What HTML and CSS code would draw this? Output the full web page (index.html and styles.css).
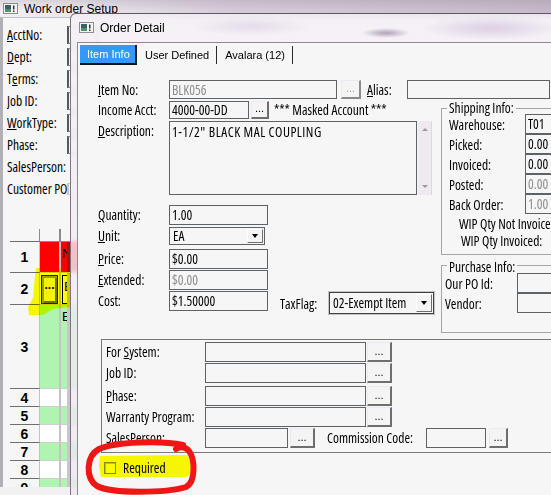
FILE: index.html
```html
<!DOCTYPE html>
<html lang="en">
<head>
    <meta charset="UTF-8">
    <meta name="viewport" content="width=device-width, initial-scale=1.0">
    <title>Order Detail</title>
    <link rel="stylesheet" href="styles.css">
</head>
<body>
<div class="desk">

    <!-- window behind: Work order Setup -->
    <div class="bgwin">
        <div class="win-title bg-title">
            <svg class="appicon" width="15" height="11" viewBox="0 0 15 11"><rect x="0.5" y="0.5" width="14" height="10" fill="#f4f4f4" stroke="#8c8c8c"/><rect x="2" y="2" width="6" height="7" fill="#3d5f66"/><rect x="2" y="6" width="6" height="3" fill="#4e9466"/><rect x="10" y="2.5" width="1.5" height="4" fill="#333"/><rect x="10" y="7.5" width="1.5" height="1.5" fill="#333"/></svg>
            <span>Work order Setup</span>
        </div>
        <div class="bg-body">
            <div class="bg-row"><span class="bg-lbl"><u>A</u>cctNo:</span><span class="bg-input"></span></div>
            <div class="bg-row"><span class="bg-lbl"><u>D</u>ept:</span><span class="bg-input"></span></div>
            <div class="bg-row"><span class="bg-lbl">T<u>e</u>rms:</span><span class="bg-input"></span></div>
            <div class="bg-row"><span class="bg-lbl"><u>J</u>ob ID:</span><span class="bg-input"></span></div>
            <div class="bg-row"><span class="bg-lbl"><u>W</u>orkType:</span><span class="bg-input"></span></div>
            <div class="bg-row"><span class="bg-lbl">Phase:</span><span class="bg-input"></span></div>
            <div class="bg-row"><span class="bg-lbl">SalesPerson:</span></div>
            <div class="bg-row"><span class="bg-lbl">Customer PO</span><span class="bg-input short"></span></div>

            <div class="grid">
                <div class="rh hd"></div><div class="gc c1 hd"></div><div class="gc c2 hd"></div><div class="gc split hd"></div><div class="gc c3 hd"></div>

                <div class="rh">1</div><div class="gc c1 red"></div><div class="gc c2 red">N</div><div class="gc split dark-red"></div><div class="gc c3 red"></div>

                <div class="rh">2</div>
                <div class="gc c1 cur"><span class="cell-btn">...</span></div>
                <div class="gc c2 cur"><span class="cell-edit">E</span></div>
                <div class="gc split"></div><div class="gc c3"></div>

                <div class="rh">3</div><div class="gc c1 grn"></div><div class="gc c2 grn">E</div><div class="gc split"></div><div class="gc c3 grn"></div>
                <div class="rh">4</div><div class="gc c1"></div><div class="gc c2"></div><div class="gc split"></div><div class="gc c3"></div>
                <div class="rh">5</div><div class="gc c1 grn"></div><div class="gc c2 grn"></div><div class="gc split"></div><div class="gc c3 grn"></div>
                <div class="rh">6</div><div class="gc c1"></div><div class="gc c2"></div><div class="gc split"></div><div class="gc c3"></div>
                <div class="rh">7</div><div class="gc c1 grn"></div><div class="gc c2 grn"></div><div class="gc split"></div><div class="gc c3 grn"></div>
                <div class="rh">8</div><div class="gc c1"></div><div class="gc c2"></div><div class="gc split"></div><div class="gc c3"></div>
                <div class="rh">9</div><div class="gc c1 grn"></div><div class="gc c2 grn"></div><div class="gc split"></div><div class="gc c3 grn"></div>
            </div>
        </div>
    </div>

    <!-- Order Detail dialog -->
    <div class="dialog">
        <div class="win-title dlg-title">
            <svg class="appicon" width="15" height="11" viewBox="0 0 15 11"><rect x="0.5" y="0.5" width="14" height="10" fill="#f4f4f4" stroke="#8c8c8c"/><rect x="2" y="2" width="6" height="7" fill="#3d5f66"/><rect x="2" y="6" width="6" height="3" fill="#4e9466"/><rect x="10" y="2.5" width="1.5" height="4" fill="#333"/><rect x="10" y="7.5" width="1.5" height="1.5" fill="#333"/></svg>
            <span>Order Detail</span>
        </div>

        <div class="client">
            <div class="tabs">
                <span class="tab active">Item Info</span>
                <span class="tab">User Defined</span>
                <span class="tab">Avalara (12)</span>
            </div>

            <div class="row top-row">
                <span class="lbl"><u>I</u>tem No:</span>
                <span class="fld dim w-item">BLK056</span>
                <span class="btn off w-sbtn">...</span>
                <span class="lbl alias"><u>A</u>lias:</span>
                <span class="fld w-alias"></span>
            </div>

            <div class="mid">
                <div class="left-col">
                    <div class="row acct-row">
                        <span class="lbl">Income Acct:</span>
                        <span class="fld w-acct">4000-00-DD</span>
                        <span class="btn w-abtn">...</span>
                        <span class="note">*** Masked Account ***</span>
                    </div>
                    <div class="row desc-row">
                        <span class="lbl top"><u>D</u>escription:</span>
                        <div class="memo">1-1/2" BLACK MAL COUPLING</div>
                        <div class="vscroll"><i class="arr up"></i><i class="arr down"></i></div>
                    </div>
                    <div class="row qty-row">
                        <span class="lbl"><u>Q</u>uantity:</span>
                        <span class="fld w-num">1.00</span>
                    </div>
                    <div class="row unit-row">
                        <span class="lbl"><u>U</u>nit:</span>
                        <span class="sel w-unit"><span class="val">EA</span><span class="ddbtn"></span></span>
                    </div>
                    <div class="row price-row">
                        <span class="lbl"><u>P</u>rice:</span>
                        <span class="fld w-num">$0.00</span>
                    </div>
                    <div class="row ext-row">
                        <span class="lbl"><u>E</u>xtended:</span>
                        <span class="fld dim w-num">$0.00</span>
                    </div>
                    <div class="row cost-row">
                        <span class="lbl">Cost:</span>
                        <span class="fld w-num">$1.50000</span>
                        <div class="taxflag">
                            <span class="tax-lbl">TaxFlag:</span>
                            <span class="sel tax-sel"><span class="val">02-Exempt Item</span><span class="ddbtn"></span></span>
                        </div>
                    </div>
                </div>

                <div class="right-col">
                    <div class="group ship">
                        <div class="group-title">Shipping Info:</div>
                        <div class="grp-row"><span class="grp-lbl">Warehouse:</span><span class="fld grp-fld">T01</span></div>
                        <div class="grp-row"><span class="grp-lbl">Picked:</span><span class="fld grp-fld">0.00</span></div>
                        <div class="grp-row"><span class="grp-lbl">Invoiced:</span><span class="fld grp-fld">0.00</span></div>
                        <div class="grp-row"><span class="grp-lbl">Posted:</span><span class="fld dim grp-fld">0.00</span></div>
                        <div class="grp-row"><span class="grp-lbl">Back Order:</span><span class="fld dim grp-fld">1.00</span></div>
                        <div class="wip first">WIP Qty Not Invoiced:</div>
                        <div class="wip second">WIP Qty Invoiced:</div>
                    </div>
                    <div class="group purch">
                        <div class="group-title">Purchase Info:</div>
                        <div class="grp-row po"><span class="grp-lbl short">Our PO Id:</span><span class="fld grp-fld"></span></div>
                        <div class="grp-row po"><span class="grp-lbl short">Vendor:</span><span class="fld grp-fld"></span></div>
                    </div>
                </div>
            </div>

            <div class="udf">
                <div class="row udf-row">
                    <span class="udf-lbl">For <u>S</u>ystem:</span>
                    <span class="fld w-udf"></span><span class="btn w-ubtn">...</span>
                </div>
                <div class="row udf-row">
                    <span class="udf-lbl"><u>J</u>ob ID:</span>
                    <span class="fld w-udf"></span><span class="btn w-ubtn">...</span>
                </div>
                <div class="row udf-row spaced">
                    <span class="udf-lbl"><u>P</u>hase:</span>
                    <span class="fld w-udf"></span><span class="btn w-ubtn">...</span>
                </div>
                <div class="row udf-row">
                    <span class="udf-lbl">Warranty Program:</span>
                    <span class="fld w-udf"></span><span class="btn w-ubtn">...</span>
                </div>
                <div class="row udf-row">
                    <span class="udf-lbl">SalesPerson:</span>
                    <span class="fld w-sales"></span><span class="btn w-ubtn sales-btn">...</span>
                    <span class="comm-lbl">Commission Code:</span>
                    <span class="fld w-comm"></span><span class="btn w-cbtn">...</span>
                </div>
            </div>

            <div class="req">
                <span class="chk"></span>
                <span class="req-lbl">Required</span>
            </div>
        </div>
    </div>

    <!-- highlighter + pen marks drawn over the screenshot -->
    <svg class="marks hl" width="551" height="495" viewBox="0 0 551 495">
        <path d="M36 268 L70 269 L70 307 L53 309 L43 315 L29 315 L28 307 L33 298 L35 276 Z" fill="#ffff00"/>
        <path d="M100 456 L187 455 L191 462 L192 474 L186 477 L101 477 L99 466 Z" fill="#ffff00"/>
    </svg>
    <svg class="marks" width="551" height="495" viewBox="0 0 551 495">
        <path d="M183 445 C160 440 115 442 99 449 C86 456 85 478 97 486 C112 494 166 493 186 487 C196 482 195 459 189 451 C186 447 181 446 176 449" fill="none" stroke="#f01616" stroke-width="6" stroke-linecap="round"/>
    </svg>
</div>
</body>
</html>
```

FILE: styles.css
```css
/* --- page / desktop --- */
* {
    box-sizing: border-box;
}

body {
    margin: 0;
    background: #f1f1f1;
    font-family: "Open Sans", "Liberation Sans", Arial, sans-serif;
    font-stretch: 75%;
    font-size: 13.5px;
    color: #000;
}

.desk {
    position: relative;
    width: 551px;
    height: 495px;
    overflow: hidden;
    background: #f1f1f1;
}

/* --- title bars (shared) --- */
.win-title {
    display: flex;
    align-items: center;
    gap: 6px;
    font-family: "Liberation Sans", Arial, sans-serif;
    font-stretch: normal;
    font-size: 12px;
    white-space: nowrap;
}

.appicon {
    flex: none;
}

/* --- background window --- */
.bgwin {
    position: absolute;
    left: 0;
    top: 0;
    width: 551px;
    height: 487px;
    overflow: hidden;
}

.bg-title {
    height: 17px;
    padding-left: 3px;
    background:
        linear-gradient(180deg, rgba(120, 100, 125, 0.18), rgba(255, 255, 255, 0) 60%),
        linear-gradient(90deg, #f1eff3 0, #ebe7ed 70px, #d6ccd9 220px, #c5b9c9 551px);
}

.bg-body {
    height: 470px;
    border-left: 3px solid #b2afb6;
    border-top: 1px solid #c4c0c8;
    background: #f6f6f6;
    padding: 6px 0 0 4px;
}

.bg-row {
    display: flex;
    align-items: center;
    height: 22px;
}

.bg-lbl {
    width: 60px;
    flex: none;
    white-space: nowrap;
    overflow: hidden;
}

.bg-input {
    width: 30px;
    height: 18px;
    border: 1px solid #8a8a8a;
    border-left: 2px solid #55595c;
    background: #f6f6f6;
}

.bg-input.short {
    height: 12px;
    border-color: #c8c8c8;
}

/* grid on the background window */
.grid {
    display: grid;
    grid-template-columns: 30px 21px 6px 3px 30px;
    grid-template-rows: 13px 31px 32px 84px repeat(6, 18px);
    margin: 29px 0 0 3px;
    width: 90px;
}

.rh {
    display: flex;
    align-items: center;
    justify-content: center;
    border-bottom: 1px solid #6e6e6e;
    border-right: 1px solid #c2c2c2;
    font-family: "Liberation Sans", Arial, sans-serif;
    font-stretch: normal;
    font-weight: bold;
    font-size: 14px;
}

.rh.hd {
    border-right-color: #8c8c8c;
}

.gc {
    background: #fff;
    border-bottom: 1px solid #cfcfcf;
    font-family: "Liberation Sans", Arial, sans-serif;
    font-stretch: normal;
    font-size: 13px;
    line-height: 1;
    overflow: hidden;
}

.gc.hd {
    background: #f6f6f6;
    border-bottom: 1px solid #8c8c8c;
}

.c1 {
    border-right: 2px solid #c4c4c4;
}

.c1.hd {
    border-right-color: #8c8c8c;
}

.c2 {
    padding: 5px 0 0 1px;
}

.split {
    background: #c8c5cc;
}

.red {
    background: #ff0000;
}

.dark-red {
    background: #a51414;
}

.grn {
    background: #aff5af;
}

.gc.cur {
    padding: 2px 1px 0 1px;
}

.cell-btn {
    display: flex;
    justify-content: center;
    height: 29px;
    padding-top: 3px;
    border: 1px solid #262626;
    background: #f4f4f4;
    box-shadow: inset 2px 2px 0 #a0a0a0, inset -2px -2px 0 #707070;
    font-weight: bold;
    font-size: 12px;
}

.cell-edit {
    display: block;
    height: 29px;
    width: 12px;
    border: 1px solid #000;
    padding: 4px 0 0 1px;
}

/* --- dialog window --- */
.dialog {
    position: absolute;
    left: 70px;
    top: 13px;
    width: 520px;
    height: 500px;
    display: flex;
    flex-direction: column;
    padding-left: 6px;
    border: 1px solid #7c7580;
    border-top-color: #5f5864;
    border-radius: 6px 0 0 0;
    background:
        radial-gradient(ellipse 24px 5px at 315px 19px, rgba(130, 110, 138, 0.6), rgba(130, 110, 138, 0)),
        radial-gradient(ellipse 70px 12px at 420px 14px, rgba(200, 180, 210, 0.55), rgba(200, 180, 210, 0)),
        radial-gradient(ellipse 60px 10px at 180px 12px, rgba(215, 200, 222, 0.5), rgba(215, 200, 222, 0)),
        linear-gradient(180deg, rgba(244, 239, 246, 0.82), rgba(236, 230, 239, 0.82));
    backdrop-filter: blur(2px);
}

.dlg-title {
    height: 28px;
    flex: none;
    padding: 0 0 1px 2px;
}

.client {
    flex: 1;
    background: #f6f6f6;
    border-left: 1px solid #8d8a90;
    border-top: 1px solid #8d8a90;
    padding-top: 2px;
}

/* tabs */
.tabs {
    display: flex;
    align-items: center;
    height: 20px;
    padding-left: 2px;
    font-family: "Liberation Sans", Arial, sans-serif;
    font-stretch: normal;
    font-size: 11px;
}

.tab {
    height: 18px;
    line-height: 18px;
    padding: 0 7px 0 8px;
    border-right: 1px solid #2a2a2a;
    white-space: nowrap;
}

.tab.active {
    width: 57px;
    height: 20px;
    padding: 0 0 0 7px;
    line-height: 18px;
    background: #3399ff;
    color: #fff;
    border-right: 2px solid #1e1e1e;
    border-bottom: 2px solid #111;
}

/* form rows */
.row {
    display: flex;
    align-items: center;
}

.lbl {
    width: 71px;
    flex: none;
    white-space: nowrap;
}

.lbl.top {
    align-self: flex-start;
    padding-top: 1px;
}

.fld {
    flex: none;
    display: flex;
    align-items: center;
    height: 100%;
    padding: 0 2px;
    border: 1px solid #5c6266;
    background: #f6f6f6;
    white-space: nowrap;
    overflow: hidden;
}

.dim {
    color: #8c8c8c;
}

.btn {
    flex: none;
    display: flex;
    justify-content: center;
    align-items: flex-end;
    height: 100%;
    padding-bottom: 3px;
    background: #f4f4f4;
    border-top: 1px solid #efe8f2;
    border-left: 1px solid #efe8f2;
    border-right: 2px solid #6e6e6e;
    border-bottom: 2px solid #6e6e6e;
    font-family: "Liberation Sans", Arial, sans-serif;
    font-stretch: normal;
    font-size: 11px;
    line-height: 1;
}

.btn.off {
    color: #a4a4a4;
    border-right-color: #8a8a8a;
    border-bottom-color: #8a8a8a;
}

.top-row {
    height: 19px;
    margin-top: 15px;
    padding-left: 20px;
}

.w-item {
    width: 168px;
}

.w-sbtn {
    width: 20px;
    margin-left: 4px;
}

.alias {
    width: 40px;
    margin-left: 6px;
}

.w-alias {
    width: 143px;
}

.mid {
    display: flex;
    margin-top: 2px;
}

.left-col {
    width: 363px;
    flex: none;
    padding-left: 20px;
}

.acct-row {
    height: 18px;
}

.w-acct {
    width: 80px;
}

.w-abtn {
    width: 18px;
    margin-left: 2px;
}

.note {
    margin-left: 5px;
    white-space: nowrap;
}

.desc-row {
    height: 74px;
    margin-top: 2px;
    align-items: stretch;
}

.memo {
    width: 248px;
    border: 1px solid #5c6266;
    padding: 1px 2px;
    letter-spacing: 0.5px;
    white-space: nowrap;
}

.vscroll {
    position: relative;
    width: 14px;
    margin-left: 1px;
    background: #efe9f1;
    border-right: 1px solid #ddd5e0;
}

.arr {
    position: absolute;
    left: 4px;
    width: 0;
    height: 0;
    border-left: 3px solid transparent;
    border-right: 3px solid transparent;
}

.arr.up {
    top: 7px;
    border-bottom: 3px solid #9c9c9c;
}

.arr.down {
    bottom: 7px;
    border-top: 3px solid #9c9c9c;
}

.qty-row {
    height: 20px;
    margin-top: 10px;
}

.unit-row {
    height: 18px;
    margin-top: 2px;
}

.price-row {
    height: 20px;
    margin-top: 4px;
}

.ext-row,
.cost-row {
    height: 20px;
    margin-top: 1px;
}

.w-num {
    width: 99px;
}

/* dropdowns */
.sel {
    flex: none;
    display: flex;
    height: 100%;
    border: 1px solid #5c6266;
    background: #f6f6f6;
}

.sel .val {
    flex: 1;
    display: flex;
    align-items: center;
    padding-left: 3px;
    white-space: nowrap;
}

.ddbtn {
    position: relative;
    width: 16px;
    margin: 1px;
    background: #f4f4f4;
    border-top: 1px solid #fff;
    border-left: 1px solid #fff;
    border-right: 1px solid #6e6e6e;
    border-bottom: 1px solid #6e6e6e;
}

.ddbtn::after {
    content: "";
    position: absolute;
    left: 4px;
    top: 50%;
    margin-top: -2px;
    border-left: 3.5px solid transparent;
    border-right: 3.5px solid transparent;
    border-top: 4px solid #000;
}

.w-unit {
    width: 96px;
}

.taxflag {
    display: flex;
    align-items: center;
    align-self: flex-start;
    height: 22px;
    margin: 1px 0 0 12px;
}

.tax-lbl {
    width: 49px;
    padding-top: 2px;
}

.tax-sel {
    width: 105px;
    border-color: #404040;
    box-shadow: 0 0 0 1px #c4c4c4;
}

/* group boxes on the right */
.right-col {
    width: 140px;
    flex: none;
    margin-top: 7px;
}

.group {
    border: 1px solid #a6a6a6;
}

.group-title {
    width: max-content;
    height: 12px;
    line-height: 12px;
    margin: -7px 0 0 5px;
    padding: 0 2px;
    background: #f6f6f6;
}

.grp-row {
    display: flex;
    align-items: center;
    height: 20px;
    padding-left: 7px;
}

.grp-lbl {
    width: 76px;
    flex: none;
    padding-top: 2px;
}

.grp-fld {
    width: 40px;
}

.wip {
    line-height: 17px;
    padding-left: 17px;
    white-space: nowrap;
}

.wip.first {
    margin-top: 2px;
}

.wip.second {
    padding-left: 19px;
}

.ship {
    padding-bottom: 4px;
}

.purch {
    margin-top: 10px;
    padding: 2px 0 19px;
}

.grp-row.po {
    padding-left: 3px;
}

.grp-lbl.short {
    width: 72px;
}

/* user defined panel */
.udf {
    margin: 6px 0 0 23px;
    padding: 2px 0 4px 4px;
    border-top: 1px solid #767676;
    border-left: 1px solid #767676;
    border-bottom: 1px solid #7a7a7a;
}

.udf-row {
    height: 20px;
    margin-top: 1px;
}

.udf-row:first-child {
    margin-top: 0;
}

.udf-row.spaced {
    margin-top: 3px;
}

.udf-lbl {
    width: 99px;
    flex: none;
    white-space: nowrap;
}

.w-udf {
    width: 161px;
}

.w-ubtn {
    width: 25px;
    margin-left: 1px;
}

.w-sales {
    width: 83px;
}

.sales-btn {
    margin-left: 2px;
}

.comm-lbl {
    width: 99px;
    margin-left: 12px;
    white-space: nowrap;
}

.w-comm {
    width: 60px;
}

.w-cbtn {
    width: 19px;
    margin-left: 3px;
}

/* required checkbox */
.req {
    display: flex;
    align-items: center;
    margin: 6px 0 0 26px;
}

.chk {
    width: 12px;
    height: 12px;
    border: 1px solid #8a8a8a;
    background: #fbfbfb;
    box-shadow: inset 1px 1px 0 #c4c4c4;
}

.req-lbl {
    margin-left: 7px;
}

/* annotation marks */
.marks {
    position: absolute;
    left: 0;
    top: 0;
    pointer-events: none;
}

.marks.hl {
    mix-blend-mode: multiply;
}
```
